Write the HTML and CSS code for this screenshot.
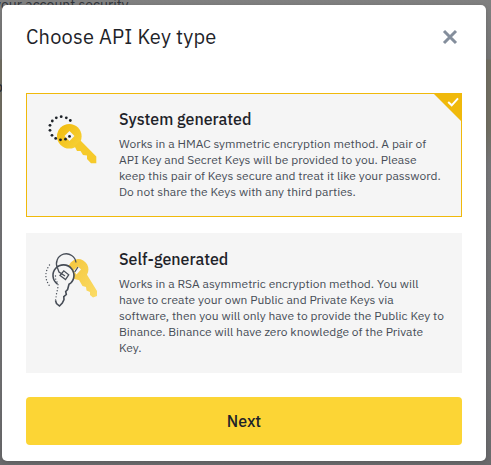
FILE: index.html
```
<!DOCTYPE html>
<html lang="en">
<head>
<meta charset="utf-8">
<title>Choose API Key type</title>
<link rel="stylesheet" href="styles.css">
</head>
<body>
<div class="backdrop">
  <div class="page-text">your account security</div>
  <div class="page-band"><span>o</span></div>
</div>
<main class="modal">
  <header class="header">
    <h1>Choose API Key type</h1>
    <svg class="close" width="16" height="16" viewBox="0 0 16 16"><path d="M2 2L14 14M14 2L2 14" fill="none" stroke="#848e9c" stroke-width="3"/></svg>
  </header>
  <section class="card selected">
    <svg class="icon" width="64" height="64" viewBox="0 0 64 64">
      <defs><linearGradient id="gold" x1="0" y1="0" x2="1" y2="1"><stop offset="0" stop-color="#f0b90b"/><stop offset="1" stop-color="#f8d33a"/></linearGradient></defs>
      <circle cx="29.300" cy="31.300" r="12.300" fill="url(#gold)"/>
      <path fill="#f6ca2b" d="M40.500 35.500L56.300 51.500V58.200H51L47 54V50.500L43 50L40.500 46H37L34.500 41Z"/>
      <path fill="#f5f5f5" d="M29.500 26L24.500 31L29.500 36L34.500 31Z"/>
      <g fill="#1e2329"><circle cx="30.300" cy="15.500" r="1.400"/><circle cx="26.300" cy="12.800" r="1.400"/><circle cx="21.200" cy="11.700" r="1.400"/><circle cx="16.300" cy="12.800" r="1.400"/><circle cx="12.300" cy="16" r="1.400"/><circle cx="10" cy="20.300" r="1.400"/><circle cx="10" cy="25.300" r="1.400"/><circle cx="12" cy="30.300" r="1.400"/><circle cx="15.700" cy="33.400" r="1.400"/><circle cx="20.500" cy="34.800" r="1.400"/><circle cx="25.500" cy="34.200" r="1.400"/><circle cx="29.500" cy="31.400" r="1.400"/></g>
    </svg>
    <div class="copy">
      <h2>System generated</h2>
      <p>Works in a HMAC symmetric encryption method. A pair of<br>API Key and Secret Keys will be provided to you. Please<br>keep this pair of Keys secure and treat it like your password.<br>Do not share the Keys with any third parties.</p>
    </div>
    <svg class="corner" width="29" height="29" viewBox="0 0 29 29"><path d="M0 0H29V29Z" fill="#f0b90b"/><path d="M15.200 9L18.700 12.300L25 5.300" fill="none" stroke="#fff" stroke-width="2"/></svg>
  </section>
  <section class="card second">
    <svg class="icon" width="64" height="64" viewBox="0 0 64 64">
      <defs><linearGradient id="pale" x1="0" y1="0" x2="1" y2="1"><stop offset="0" stop-color="#f4c63c"/><stop offset="1" stop-color="#fbdc66"/></linearGradient></defs>
      <path fill="url(#pale)" fill-rule="evenodd" d="M38 14a10.500 10.500 0 0 1 9 15.800L57 46V51L53 52.500L50 50V47L46.500 45.500L46 42L42.500 41L39 35A10.500 10.500 0 1 1 38 14ZM38 21.500L33.500 25.500L36.500 29.500L41 24.500Z"/>
      <path d="M17.500 23A9.800 9.800 0 1 1 36 17.500M38 22L34.700 27" fill="none" stroke="#474d57" stroke-width="1.300"/>
      <path d="M23.500 20.300A10.500 10.500 0 0 1 29 39.300L27.600 44.500L25.700 46.500L26.300 49.500L23.800 51.700L24 54.500L22.300 58L19.500 61L16.500 58.500L15.500 55.500L18 39A10.500 10.500 0 0 1 23.500 20.300Z" fill="#f5f5f5"/>
      <path d="M17.500 39A10.500 10.500 0 1 1 29 39.300L27.600 44.500L25.700 46.500L26.300 49.500L23.800 51.700L24 54.500L22.300 58L19.500 61L16.500 58.500L15.500 55.500" fill="none" stroke="#474d57" stroke-width="1.600"/>
      <path d="M23.800 25.800L20 30.500L25.500 34.500L28.700 29.800ZM17.500 23L19 27L25 31" fill="none" stroke="#474d57" stroke-width="1.300"/>
      <path d="M9.500 20Q2 31 10 41.500M15.500 31Q15 35 18 38L18 42L16.500 49L15.600 55" fill="none" stroke="#474d57" stroke-width="1.400" stroke-linecap="round" stroke-dasharray="0 3.100"/>
    </svg>
    <div class="copy">
      <h2>Self-generated</h2>
      <p>Works in a RSA asymmetric encryption method. You will<br>have to create your own Public and Private Keys via<br>software, then you will only have to provide the Public Key to<br>Binance. Binance will have zero knowledge of the Private<br>Key.</p>
    </div>
  </section>
  <button class="next">Next</button>
</main>
</body>
</html>
```
FILE: styles.css
```
* { box-sizing: border-box; }
body {
  margin: 0;
  width: 491px;
  height: 465px;
  overflow: hidden;
  padding: 5px 5px 4px 2px;
  background: #777;
  color: #1e2329;
  font-family: "IBM Plex Sans", Roboto, "Liberation Sans", sans-serif;
}
.backdrop {
  position: absolute;
  inset: 0;
  overflow: hidden;
  background: linear-gradient(#808080 0, #747474 59px, #716e62 60px, #716e62 128px, #757577 165px, #717173 380px, #69696b 465px);
}
.page-text {
  position: absolute;
  left: -6px;
  top: -3px;
  font-size: 14px;
  line-height: 16px;
  white-space: nowrap;
  color: #30343a;
}
.page-band { position: absolute; left: -5px; top: 79px; font-size: 14px; line-height: 16px; }
.modal {
  position: relative;
  width: 484px;
  height: 456px;
  padding: 0 24px 16px;
  border-radius: 5px;
  background: #fff;
  box-shadow: 0 1px 4px rgba(0, 0, 0, .15);
}
.header {
  display: flex;
  justify-content: space-between;
  align-items: center;
  height: 64px;
  padding-right: 4px;
  margin-bottom: 24px;
}
h1, h2, p { margin: 0; }
h1 { font-size: 20px; line-height: 28px; font-weight: 400; letter-spacing: .2px; }
.close { display: block; }
.card {
  position: relative;
  display: flex;
  gap: 15px;
  height: 124px;
  padding: 12px 0 0 14px;
  background: #f5f5f5;
}
.selected { box-shadow: inset 0 0 0 1px #f0b90b; }
.second { height: 140px; margin-top: 16px; }
.icon { flex: none; }
.copy { padding-top: 2px; white-space: nowrap; }
h2 { font-size: 16px; line-height: 24px; font-weight: 500; }
p { margin-top: 5px; font-size: 12px; line-height: 16px; color: #474d57; }
.corner { position: absolute; top: 0; right: 0; }
.next {
  display: block;
  width: 100%;
  height: 48px;
  margin-top: 24px;
  padding: 0;
  border: 0;
  border-radius: 4px;
  background: #fcd535;
  color: #1e2329;
  font: 500 16px/24px "IBM Plex Sans", Roboto, "Liberation Sans", sans-serif;
}
```
